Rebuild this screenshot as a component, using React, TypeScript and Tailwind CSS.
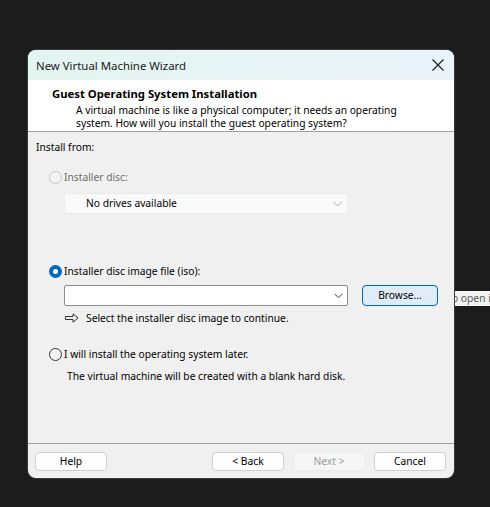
import React from "react";

const font = { fontFamily: '"Noto Sans", "Open Sans", sans-serif' };

function Radio({ state }: { state: "off" | "on" | "disabled" }) {
  if (state === "on") {
    return (
      <span className="flex h-[13px] w-[13px] shrink-0 items-center justify-center rounded-full bg-[#0067c0]">
        <span className="h-[5px] w-[5px] rounded-full bg-white" />
      </span>
    );
  }
  if (state === "disabled") {
    return <span className="h-[13px] w-[13px] shrink-0 rounded-full border border-[#c5c5c5] bg-[#f3f3f3]" />;
  }
  return <span className="h-[13px] w-[13px] shrink-0 rounded-full border border-[#333333] bg-[#f5f5f5]" />;
}

function Chevron({ color }: { color: string }) {
  return (
    <svg width="9" height="6" viewBox="0 0 9 6" fill="none">
      <path d="M0.5 0.8 L4.5 4.8 L8.5 0.8" stroke={color} strokeWidth="1" />
    </svg>
  );
}

function Btn({ label, disabled }: { label: string; disabled?: boolean }) {
  return (
    <div
      className={
        disabled
          ? "flex h-[19px] w-[72px] items-center justify-center rounded-[4px] border border-[#ececec] bg-[#f6f6f6] text-[#9a9a9a]"
          : "flex h-[19px] w-[72px] items-center justify-center rounded-[4px] border border-[#cfcfcf] bg-[#fdfdfd] text-black"
      }
    >
      {label}
    </div>
  );
}

export default function App() {
  return (
    <div className="relative h-[507px] w-[490px] overflow-hidden bg-[#1c1c1c] pl-[28px] pt-[50px] text-[10.25px] leading-[15px]" style={font}>
      <div className="flex h-[428px] w-[426px] flex-col overflow-hidden rounded-[8px] bg-[#f0f0f0] shadow-[0_0_0_1px_#3a3a3a]">
        {/* Title bar */}
        <div className="flex h-[30px] shrink-0 items-center justify-between bg-gradient-to-r from-[#e3f5f0] to-[#ebf3fa] pl-[8px] pr-[10px]">
          <span className="text-[11.4px] text-[#1a1a1a]">New Virtual Machine Wizard</span>
          <svg width="12" height="12" viewBox="0 0 12 12">
            <path d="M0.5 0.5 L11.5 11.5 M11.5 0.5 L0.5 11.5" stroke="#1a1a1a" strokeWidth="1.1" />
          </svg>
        </div>
        {/* Header */}
        <div className="h-[52px] shrink-0 border-b border-[#a0a0a0] bg-white pl-[24px] pt-[6px]">
          <div className="text-[11.3px] font-bold text-black">Guest Operating System Installation</div>
          <div className="mt-[3px] pl-[24px] leading-[13px] text-black">
            A virtual machine is like a physical computer; it needs an operating
            <br />
            system. How will you install the guest operating system?
          </div>
        </div>
        {/* Body */}
        <div className="flex-1 pl-[8px]">
          <div className="mt-[8px] h-[15px] text-black">Install from:</div>
          <div className="ml-[13px] mt-[14px] flex h-[16px] items-center gap-[2px]">
            <Radio state="disabled" />
            <span className="text-[#6d6d6d]">Installer disc:</span>
          </div>
          <div className="ml-[28px] mt-[8px] flex h-[21px] w-[284px] items-center justify-between border border-[#ececec] bg-[#fafafa] pl-[21px] pr-[5px]">
            <span className="text-black">No drives available</span>
            <Chevron color="#a8a8a8" />
          </div>
          <div className="ml-[13px] mt-[49px] flex h-[16px] items-center gap-[2px]">
            <Radio state="on" />
            <span className="text-black">Installer disc image file (iso):</span>
          </div>
          <div className="ml-[28px] mt-[6px] flex h-[21px] items-center gap-[14px]">
            <div className="flex h-[21px] w-[284px] items-center justify-end rounded-[2px] border border-[#8c8c8c] bg-white pr-[4px]">
              <Chevron color="#444444" />
            </div>
            <div className="flex h-[21px] w-[76px] items-center justify-center rounded-[4px] border border-[#0067c0] bg-[#e0edf9] text-black">
              Browse...
            </div>
          </div>
          <div className="ml-[29px] mt-[5px] flex h-[14px] items-center">
            <svg width="14" height="10" viewBox="0 0 14 10" fill="none">
              <path d="M0.5 3.5 H8 V0.8 L13 5 L8 9.2 V6.5 H0.5 Z" stroke="#333" strokeWidth="1" strokeLinejoin="miter" />
            </svg>
            <span className="ml-[7px] text-black">Select the installer disc image to continue.</span>
          </div>
          <div className="ml-[13px] mt-[21px] flex h-[16px] items-center gap-[2px]">
            <Radio state="off" />
            <span className="text-black">I will install the operating system later.</span>
          </div>
          <div className="ml-[31px] mt-[7px] h-[14px] text-black">
            The virtual machine will be created with a blank hard disk.
          </div>
        </div>
        {/* Footer */}
        <div className="flex h-[35px] shrink-0 items-start border-t border-[#a0a0a0] pl-[7px] pr-[8px] pt-[8px]">
          <Btn label="Help" />
          <div className="flex-1" />
          <div className="flex gap-[9px]">
            <Btn label="< Back" />
            <Btn label="Next >" disabled />
            <Btn label="Cancel" />
          </div>
        </div>
      </div>
      {/* partially visible tooltip behind */}
      <div className="absolute left-[455px] top-[291px] h-[15px] w-[35px] overflow-hidden bg-[#f2f2f2] text-[#5a5a5a]">
        <span className="ml-[-3px] whitespace-nowrap">o open it</span>
      </div>
    </div>
  );
}
